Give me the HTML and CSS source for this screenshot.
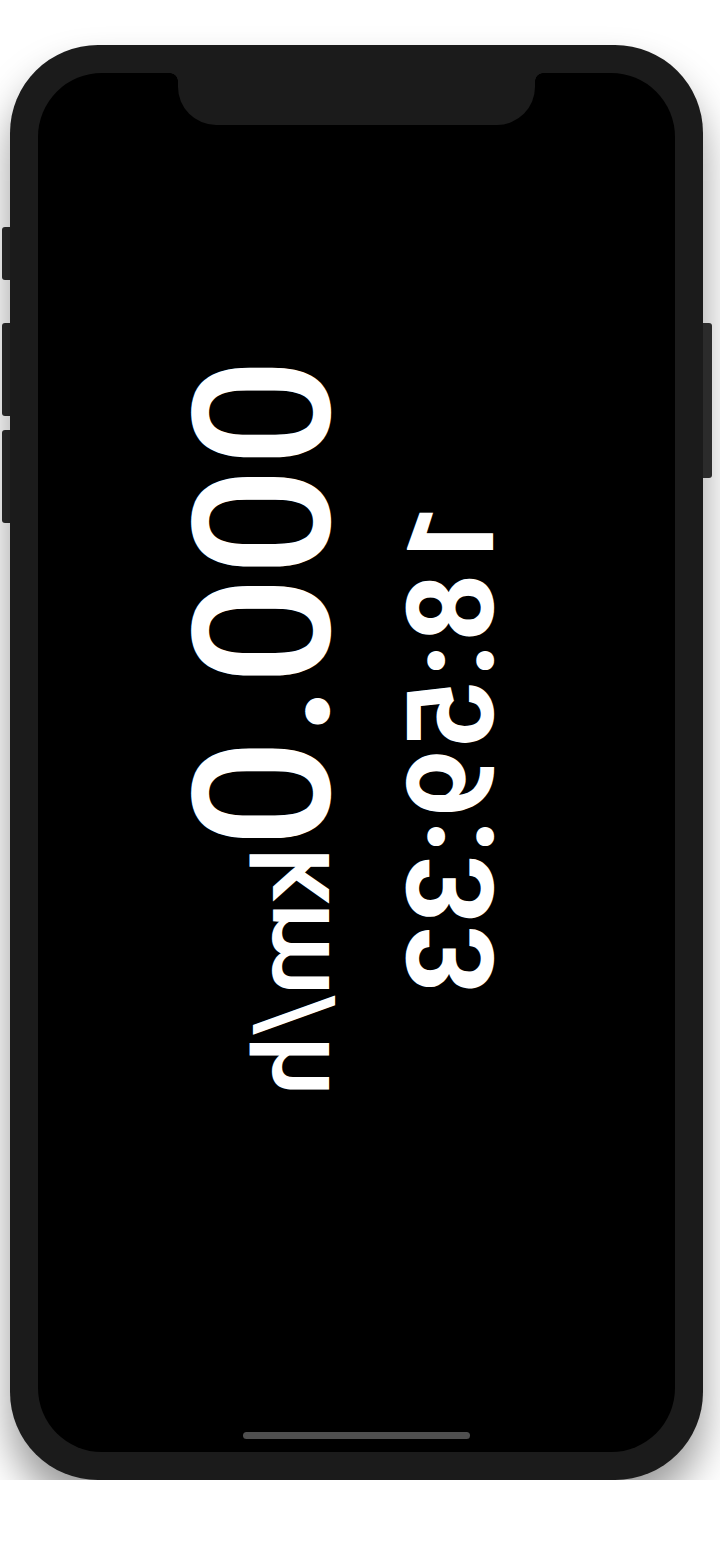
FILE: index.html
```html
<!DOCTYPE html>
<html lang="en">
<head>
<meta charset="utf-8">
<title>Speedometer</title>
<link rel="stylesheet" href="styles.css">
</head>
<body>
<div class="device">
  <div class="buttons-left">
    <span class="btn btn-mute"></span>
    <span class="btn btn-vol-up"></span>
    <span class="btn btn-vol-down"></span>
  </div>
  <div class="phone">
    <div class="screen">
      <div class="notch"></div>
      <div class="readout">
        <div class="speed"><span class="speed-value">000.0</span><span class="speed-unit">km/h</span></div>
        <div class="clock">18:59:33</div>
      </div>
      <div class="home-indicator"></div>
    </div>
  </div>
  <div class="buttons-right">
    <span class="btn btn-power"></span>
  </div>
</div>
</body>
</html>
```
FILE: styles.css
```css
html, body {
  margin: 0;
  padding: 0;
  background: #ffffff;
}

body {
  font-family: Roboto, "Liberation Sans", sans-serif;
}

.device {
  display: flex;
  align-items: flex-start;
  padding: 45px 0 0 2px;
}

.buttons-left,
.buttons-right {
  display: flex;
  flex-direction: column;
  width: 9px;
}

.buttons-left {
  width: 8px;
}

.btn {
  display: block;
  background: #2b2b2b;
}

.buttons-left .btn {
  border-radius: 3px 0 0 3px;
}

.buttons-right .btn {
  border-radius: 0 3px 3px 0;
}

.btn-mute {
  margin-top: 182px;
  height: 53px;
}

.btn-vol-up {
  margin-top: 43px;
  height: 93px;
}

.btn-vol-down {
  margin-top: 14px;
  height: 93px;
}

.btn-power {
  margin-top: 278px;
  height: 155px;
}

.phone {
  width: 693px;
  height: 1435px;
  box-sizing: border-box;
  padding: 28px;
  background: #1b1b1b;
  border-radius: 88px;
  box-shadow: 0 26px 40px rgba(0, 0, 0, 0.4);
}

.screen {
  position: relative;
  height: 100%;
  box-sizing: border-box;
  background: #000000;
  border-radius: 64px;
  padding: 285px 0 0 130px;
}

.notch {
  position: absolute;
  top: 0;
  left: 140px;
  width: 357px;
  height: 52px;
  background: #1b1b1b;
  border-radius: 0 0 38px 38px;
}

.notch::before,
.notch::after {
  content: "";
  position: absolute;
  top: 0;
  width: 8px;
  height: 8px;
}

.notch::before {
  left: -8px;
  background: radial-gradient(circle at 0 100%, transparent 7.5px, #1b1b1b 8px);
}

.notch::after {
  right: -8px;
  background: radial-gradient(circle at 100% 100%, transparent 7.5px, #1b1b1b 8px);
}

.readout {
  width: max-content;
  color: #ffffff;
  transform: matrix(0, 1, 1, 0, 0, 0);
  transform-origin: 0 0;
  white-space: nowrap;
}

.speed {
  font-family: Roboto, "Liberation Sans", sans-serif;
  font-size: 192px;
  font-weight: 500;
  line-height: 1;
}

.speed-unit {
  font-size: 106px;
}

.clock {
  margin-top: 32px;
  margin-left: 145px;
  font-family: Roboto, "Liberation Sans", sans-serif;
  font-size: 120px;
  font-weight: 700;
  letter-spacing: 1.5px;
  line-height: 1;
}

.home-indicator {
  position: absolute;
  left: 0;
  right: 0;
  bottom: 13px;
  width: 227px;
  height: 7px;
  margin: 0 auto;
  border-radius: 4px;
  background: #4f4f4f;
}
```
